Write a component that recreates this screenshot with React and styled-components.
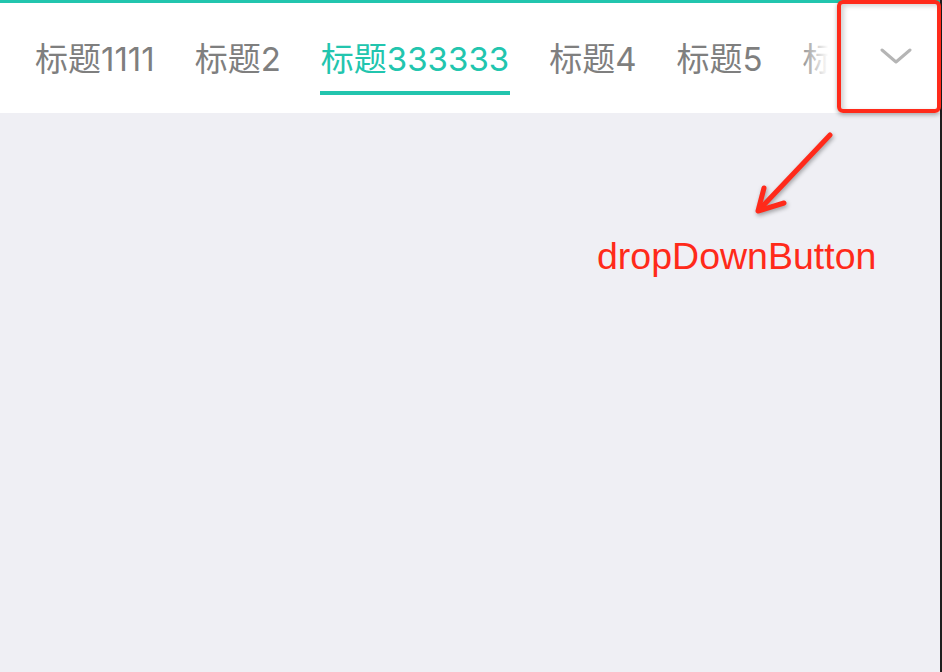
import React from "react";
import styled, { createGlobalStyle } from "styled-components";

const GlobalStyle = createGlobalStyle`
  html, body {
    margin: 0;
    padding: 0;
    background: #1e1e1e;
  }
  body {
    font-family: "Liberation Sans", "Noto Sans CJK SC", sans-serif;
  }
`;

const Screen = styled.div`
  position: relative;
  width: 940px;
  height: 672px;
  background: #efeff4;
  display: flex;
  flex-direction: column;
`;

const Header = styled.header`
  position: relative;
  display: flex;
  height: 110px;
  background: #fff;
  border-top: 3px solid #22c5ae;
`;

const TabStrip = styled.div`
  position: relative;
  flex: 1;
  display: flex;
  gap: 40px;
  padding-left: 35px;
  overflow: hidden;
  white-space: nowrap;
`;

const Fade = styled.div`
  position: absolute;
  top: 0;
  right: 0;
  width: 40px;
  height: 100%;
  background: linear-gradient(to right, rgba(255, 255, 255, 0), #fff 78%);
`;

const Tab = styled.div`
  display: flex;
  flex-direction: column;
  flex-shrink: 0;
`;

const Label = styled.span`
  margin-top: 36px;
  font-family: Inter, "Noto Sans CJK SC", sans-serif;
  font-size: 33px;
  line-height: 40px;
  color: ${(p) => (p.active ? "#22c5ae" : "#7f7f7f")};
`;

const Indicator = styled.div`
  height: 4px;
  margin: 12px -1px 0;
  background: ${(p) => (p.active ? "#22c5ae" : "transparent")};
`;

const DropDownButton = styled.button`
  width: 103px;
  flex-shrink: 0;
  border: none;
  padding: 0 0 4px 14px;
  background: #fff;
  display: flex;
  align-items: center;
  justify-content: center;
`;

const Highlight = styled.div`
  position: absolute;
  top: -3px;
  right: -1px;
  width: 104px;
  height: 113px;
  box-sizing: border-box;
  border: 4px solid #ff2a1a;
  border-radius: 6px;
  box-shadow: 0 2px 4px rgba(0, 0, 0, 0.3), inset 3px 2px 5px rgba(0, 0, 0, 0.18);
  pointer-events: none;
`;

const Note = styled.div`
  position: absolute;
  left: 596px;
  top: 120px;
  width: 300px;
  height: 170px;
`;

const Arrow = styled.svg`
  position: absolute;
  left: 140px;
  top: 0;
  overflow: visible;
  filter: drop-shadow(1px 2px 2px rgba(0, 0, 0, 0.35));
`;

const NoteText = styled.span`
  position: absolute;
  left: 1px;
  top: 116px;
  font-size: 37.5px;
  line-height: 40px;
  color: #ff2a1a;
`;

const tabs = ["标题1111", "标题2", "标题333333", "标题4", "标题5", "标题6"];

export default function App() {
  const active = 2;
  return (
    <>
      <GlobalStyle />
      <Screen>
        <Header>
          <TabStrip>
            {tabs.map((t, i) => (
              <Tab key={i}>
                <Label active={i === active}>{t}</Label>
                <Indicator active={i === active} />
              </Tab>
            ))}
            <Fade />
          </TabStrip>
          <DropDownButton aria-label="dropDownButton">
            <svg width="32" height="18" viewBox="0 0 32 18">
              <path
                d="M2 3 L16 15 L30 3"
                fill="none"
                stroke="#b5b5b5"
                strokeWidth="3"
                strokeLinecap="round"
                strokeLinejoin="round"
              />
            </svg>
          </DropDownButton>
          <Highlight />
        </Header>
        <Note>
          <Arrow width="100" height="100" viewBox="0 0 100 100">
            <g
              fill="none"
              stroke="#ff2a1a"
              strokeWidth="5"
              strokeLinecap="round"
              strokeLinejoin="round"
            >
              <path d="M94 15 L23 90" />
              <path d="M28 68 L22 91 L48 83" />
            </g>
          </Arrow>
          <NoteText>dropDownButton</NoteText>
        </Note>
      </Screen>
    </>
  );
}
